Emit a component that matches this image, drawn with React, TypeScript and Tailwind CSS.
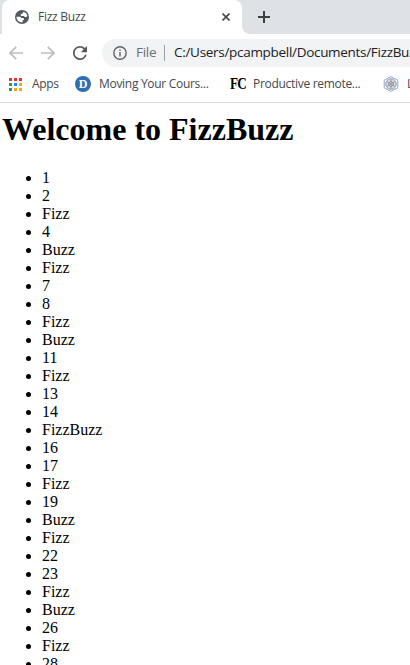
import React from "react";

const items = Array.from({ length: 28 }, (_, i) => {
  const n = i + 1;
  return (n % 3 === 0 ? "Fizz" : "") + (n % 5 === 0 ? "Buzz" : "") || String(n);
});

const appColors = ["#ea3237", "#ea3237", "#ea3237", "#34975a", "#1a8cff", "#f9a51a", "#34975a", "#f9a51a", "#f9a51a"];

function Globe() {
  return (
    <svg className="size-[14px] shrink-0" viewBox="0 0 14 14" fill="none">
      <circle cx="7" cy="7" r="7" fill="#54595e" />
      <path
        d="M8.600 1.700C10.600 2.300 12 3.900 12.400 5.900L11.500 6.900H9.700L8.900 6H6.300L5.700 5.200V4.300L7.300 3.700zM1.500 6.700H4.600C5.500 6.700 6 7.200 6 8H8.200L9 8.800V9.800L7.500 10.500V12.400C4.300 12.500 1.500 10.200 1.500 6.700z"
        fill="#fff"
      />
    </svg>
  );
}

function TabStrip() {
  return (
    <header className="flex h-[34px] bg-[#dee1e6] pl-[2px]">
      <div className="flex h-[34px] w-[240px] items-center rounded-t-[8px] bg-white pl-[13px] text-[12px] text-[#45494d]">
        <Globe />
        <span className="ml-[9px] w-[184px] whitespace-nowrap tracking-[-0.25px]">Fizz Buzz</span>
        <svg className="size-[8px]" viewBox="0 0 8 8" stroke="#45494d" strokeWidth="1.6">
          <path d="M.5.5l7 7M7.500.5l-7 7" />
        </svg>
      </div>
      <div className="h-[34px] w-[8px] bg-white">
        <div className="h-full rounded-bl-[8px] bg-[#dee1e6]" />
      </div>
      <svg className="mt-[11px] ml-[8px] size-[12px]" viewBox="0 0 12 12" stroke="#3c4043" strokeWidth="2">
        <path d="M6 0v12M0 6h12" />
      </svg>
    </header>
  );
}

function Toolbar() {
  return (
    <div className="flex h-[36px] items-center pt-[1px] pl-[9px]">
      <svg className="size-[14px] shrink-0" viewBox="0 0 14 14" fill="none" stroke="#babcbe" strokeWidth="1.7">
        <path d="M14 7H1.200M7.200.8L1 7l6.200 6.200" />
      </svg>
      <svg className="ml-[18px] size-[14px] shrink-0" viewBox="0 0 14 14" fill="none" stroke="#babcbe" strokeWidth="1.7">
        <path d="M0 7h12.800M6.800.8L13 7l-6.200 6.200" />
      </svg>
      <svg className="ml-[18px] size-[14px] shrink-0" viewBox="4 4 16 16" fill="#55595d">
        <path d="M17.650 6.350A7.960 7.960 0 0 0 12 4a8 8 0 1 0 7.730 10h-2.080A6 6 0 1 1 12 6c1.660 0 3.140.69 4.220 1.780L13 11h7V4z" />
      </svg>
      <div className="ml-[15px] flex h-[28px] grow items-center overflow-hidden rounded-l-full bg-[#f1f3f4] pl-[11px] whitespace-nowrap">
        <svg className="size-[14px] shrink-0" viewBox="0 0 14 14" fill="none" stroke="#5f6368" strokeWidth="1.4">
          <circle cx="7" cy="7" r="6.200" />
          <path d="M7 6v4.500M7 3.500v1.500" />
        </svg>
        <span className="ml-[9px] w-[28px] shrink-0 text-[13.5px] tracking-[-0.3px] text-[#6b6f74]">File</span>
        <span className="h-[16px] w-px shrink-0 bg-[#9a9da1]" />
        <span className="ml-[9px] text-[13.5px] tracking-[-0.3px] text-[#202124]">C:/Users/pcampbell/Documents/FizzBuzz</span>
      </div>
    </div>
  );
}

function Bookmarks() {
  return (
    <nav className="flex h-[33px] items-center overflow-hidden border-b border-[#d8dadd] pb-[4px] pl-[9px] text-[12px] whitespace-nowrap text-[#45494d]">
      <svg className="size-[13px] shrink-0" viewBox="0 0 13 13" shapeRendering="crispEdges">
        {appColors.map((c, i) => (
          <rect key={i} x={(i % 3) * 5} y={Math.floor(i / 3) * 5} width="3" height="3" fill={c} />
        ))}
      </svg>
      <span className="ml-[10px] w-[43px] shrink-0 tracking-[-0.3px]">Apps</span>
      <span className="flex size-[16px] shrink-0 items-center justify-center rounded-full bg-[#2f6fb0] font-['Liberation_Serif',serif] text-[12px] leading-none font-bold text-white">D</span>
      <span className="ml-[8px] w-[130px] shrink-0 tracking-[-0.3px]">Moving Your Cours...</span>
      <span className="ml-[1px] w-[15px] shrink-0 origin-left scale-x-[0.82] font-['Liberation_Serif',serif] text-[16px] leading-none font-bold tracking-[-1px] text-black">FC</span>
      <span className="ml-[8px] w-[130px] shrink-0 tracking-[-0.3px]">Productive remote...</span>
      <svg className="size-[16px] shrink-0" viewBox="0 0 16 16" fill="none">
        <path d="M8 .6l6.800 3.700v7.400L8 15.400l-6.800-3.700V4.300z" stroke="#8fa5d2" />
        <circle cx="8" cy="8" r="5.300" fill="#d5d8da" stroke="#9da4aa" />
        <path d="M8 3v10M4 5.500l8 5M12 5.500l-8 5M5 8l3-3 3 3-3 3z" stroke="#8b9298" strokeWidth=".8" />
      </svg>
      <span className="ml-[8px] shrink-0">L</span>
    </nav>
  );
}

export default function App() {
  return (
    <div className="h-[665px] w-[410px] overflow-hidden bg-white font-['Open_Sans','Noto_Sans',sans-serif]">
      <TabStrip />
      <Toolbar />
      <Bookmarks />
      <main className="pl-[2px] font-['Liberation_Serif',serif] text-black">
        <h1 className="mt-[8px] text-[32px] leading-[37px] font-bold">Welcome to FizzBuzz</h1>
        <ul className="mt-[21px] list-disc pl-[40px] text-[16px] leading-[18px]">
          {items.map((text, i) => (
            <li key={i}>{text}</li>
          ))}
        </ul>
      </main>
    </div>
  );
}
